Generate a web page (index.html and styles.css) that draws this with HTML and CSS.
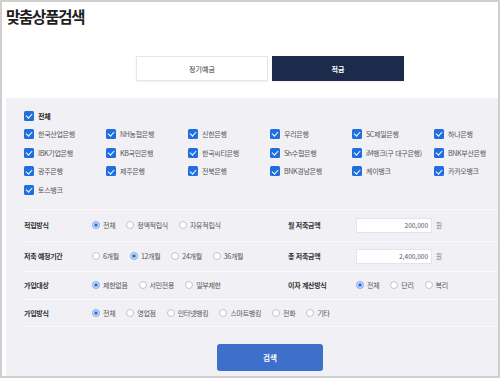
FILE: index.html
```html
<!DOCTYPE html>
<html lang="ko">
<head>
<meta charset="utf-8">
<link rel="stylesheet" href="styles.css">
</head>
<body>
<div class="page">
  <h1 class="title">맞춤상품검색</h1>
  <div class="tabs">
    <div class="tab">정기예금</div>
    <div class="tab tab-active">적금</div>
  </div>
  <div class="panel">
    <div class="inner">
      <label class="cb-item all"><span class="cb"></span>전체</label>
      <div class="banks">
        <label class="cb-item"><span class="cb"></span>한국산업은행</label>
        <label class="cb-item"><span class="cb"></span>NH농협은행</label>
        <label class="cb-item"><span class="cb"></span>신한은행</label>
        <label class="cb-item"><span class="cb"></span>우리은행</label>
        <label class="cb-item"><span class="cb"></span>SC제일은행</label>
        <label class="cb-item"><span class="cb"></span>하나은행</label>
        <label class="cb-item"><span class="cb"></span>IBK기업은행</label>
        <label class="cb-item"><span class="cb"></span>KB국민은행</label>
        <label class="cb-item"><span class="cb"></span>한국씨티은행</label>
        <label class="cb-item"><span class="cb"></span>Sh수협은행</label>
        <label class="cb-item"><span class="cb"></span>iM뱅크(구 대구은행)</label>
        <label class="cb-item"><span class="cb"></span>BNK부산은행</label>
        <label class="cb-item"><span class="cb"></span>광주은행</label>
        <label class="cb-item"><span class="cb"></span>제주은행</label>
        <label class="cb-item"><span class="cb"></span>전북은행</label>
        <label class="cb-item"><span class="cb"></span>BNK경남은행</label>
        <label class="cb-item"><span class="cb"></span>케이뱅크</label>
        <label class="cb-item"><span class="cb"></span>카카오뱅크</label>
        <label class="cb-item"><span class="cb"></span>토스뱅크</label>
      </div>

      <div class="form">
        <div class="row r1">
          <div class="half">
            <div class="label">적립방식</div>
            <div class="opts">
              <span class="rd on"></span><span class="opt">전체</span>
              <span class="rd"></span><span class="opt">정액적립식</span>
              <span class="rd"></span><span class="opt">자유적립식</span>
            </div>
          </div>
          <div class="half">
            <div class="label">월 저축금액</div>
            <div class="amount"><span class="input">200,000</span><span class="unit">원</span></div>
          </div>
        </div>
        <div class="row r2">
          <div class="half">
            <div class="label">저축 예정기간</div>
            <div class="opts">
              <span class="rd"></span><span class="opt">6개월</span>
              <span class="rd on"></span><span class="opt">12개월</span>
              <span class="rd"></span><span class="opt">24개월</span>
              <span class="rd"></span><span class="opt">36개월</span>
            </div>
          </div>
          <div class="half">
            <div class="label">총 저축금액</div>
            <div class="amount"><span class="input">2,400,000</span><span class="unit">원</span></div>
          </div>
        </div>
        <div class="row r3">
          <div class="half">
            <div class="label">가입대상</div>
            <div class="opts">
              <span class="rd on"></span><span class="opt">제한없음</span>
              <span class="rd"></span><span class="opt">서민전용</span>
              <span class="rd"></span><span class="opt">일부제한</span>
            </div>
          </div>
          <div class="half">
            <div class="label">이자 계산방식</div>
            <div class="opts">
              <span class="rd on"></span><span class="opt">전체</span>
              <span class="rd"></span><span class="opt">단리</span>
              <span class="rd"></span><span class="opt">복리</span>
            </div>
          </div>
        </div>
        <div class="row r4">
          <div class="label">가입방식</div>
          <div class="opts">
            <span class="rd on"></span><span class="opt">전체</span>
            <span class="rd"></span><span class="opt">영업점</span>
            <span class="rd"></span><span class="opt">인터넷뱅킹</span>
            <span class="rd"></span><span class="opt">스마트뱅킹</span>
            <span class="rd"></span><span class="opt">전화</span>
            <span class="rd"></span><span class="opt">기타</span>
          </div>
        </div>
      </div>

      <div class="actions">
        <button class="btn" type="button">검색</button>
      </div>
    </div>
  </div>
</div>
</body>
</html>
```
FILE: styles.css
```css
* { box-sizing: border-box; }
html, body { margin: 0; padding: 0; background: #fff; }
body { font-family: "Noto Sans CJK KR", "Noto Sans", sans-serif; color: #333; }

.page {
  width: 500px;
  height: 378px;
  border: 2px solid #cfcfcf;
  overflow: hidden;
  background: #fff;
}

.title {
  margin: 0;
  padding: 4px 0 0 4px;
  font-size: 15.5px;
  line-height: 20px;
  font-weight: 700;
  letter-spacing: -1.2px;
  color: #1e1e1e;
}

.tabs {
  display: flex;
  justify-content: center;
  gap: 4px;
  width: 492px;
  margin: 30px 0 0 22px;
}
.tab {
  width: 132px;
  height: 25px;
  display: flex;
  align-items: center;
  justify-content: center;
  font-size: 7px;
  color: #333;
  background: #fff;
  border: 1px solid #e6e6e6;
  box-shadow: 0 1px 2px rgba(0,0,0,0.06);
}
.tab-active {
  background: #1c2b4b;
  color: #fff;
  border-color: #1c2b4b;
  font-weight: 700;
}

.panel {
  margin: 17px 0 0 4px;
  height: 300px;
  background: #f1f1f5;
  padding: 9px 0 0 18px;
  overflow: hidden;
}
.inner { width: 492px; }

.cb-item {
  display: flex;
  align-items: center;
  gap: 4px;
  font-size: 7px;
  color: #555;
  letter-spacing: -0.3px;
  white-space: nowrap;
}
.all {
  height: 18px;
  font-weight: 700;
  color: #222;
}
.cb {
  position: relative;
  flex: none;
  width: 10px;
  height: 10px;
  border-radius: 1.5px;
  background: #1f6fe0;
}
.cb::after {
  content: "";
  position: absolute;
  left: 3.4px;
  top: 1.2px;
  width: 2.6px;
  height: 5.4px;
  border: solid #fff;
  border-width: 0 1.5px 1.5px 0;
  transform: rotate(42deg);
}

.banks {
  display: grid;
  grid-template-columns: repeat(6, 82px);
  grid-auto-rows: 18.6px;
}

.form {
  margin-top: 9.6px;
  border-top: 1px solid #fbfbfd;
}
.row {
  display: flex;
  align-items: center;
  border-bottom: 1px solid #fbfbfd;
}
.r1 { height: 32px; }
.r2 { height: 30px; }
.r3 { height: 28px; }
.r4 { height: 27px; }
.half {
  display: flex;
  align-items: center;
  flex: none;
  width: 264px;
}
.label {
  width: 68px;
  flex: none;
  font-size: 7px;
  font-weight: 600;
  color: #333;
  letter-spacing: -0.3px;
  white-space: nowrap;
}
.opts {
  display: flex;
  align-items: center;
  font-size: 7px;
  color: #555;
  letter-spacing: -0.3px;
  white-space: nowrap;
}
.rd {
  flex: none;
  width: 8px;
  height: 8px;
  border-radius: 50%;
  border: 1px solid #c4c4c8;
  background: #fff;
  margin-right: 3px;
}
.rd.on {
  border-color: #9fbcef;
  background: #1f6fe0;
  box-shadow: inset 0 0 0 1.2px #dfe9fb;
}
.opt { margin-right: 11px; }

.amount {
  display: flex;
  align-items: center;
  gap: 4px;
}
.input {
  width: 76px;
  height: 15px;
  background: #fff;
  border: 1px solid #e4e4e8;
  font-size: 6.5px;
  color: #555;
  text-align: right;
  padding-right: 3px;
  line-height: 13px;
}
.unit { font-size: 6.5px; color: #777; }

.actions {
  display: flex;
  justify-content: center;
  padding-top: 17px;
}
.btn {
  width: 106px;
  height: 27px;
  border: 0;
  border-radius: 3px;
  background: #3d6fcb;
  color: #fff;
  font-family: "Noto Sans CJK KR", sans-serif;
  font-size: 7.5px;
  font-weight: 700;
}
```
